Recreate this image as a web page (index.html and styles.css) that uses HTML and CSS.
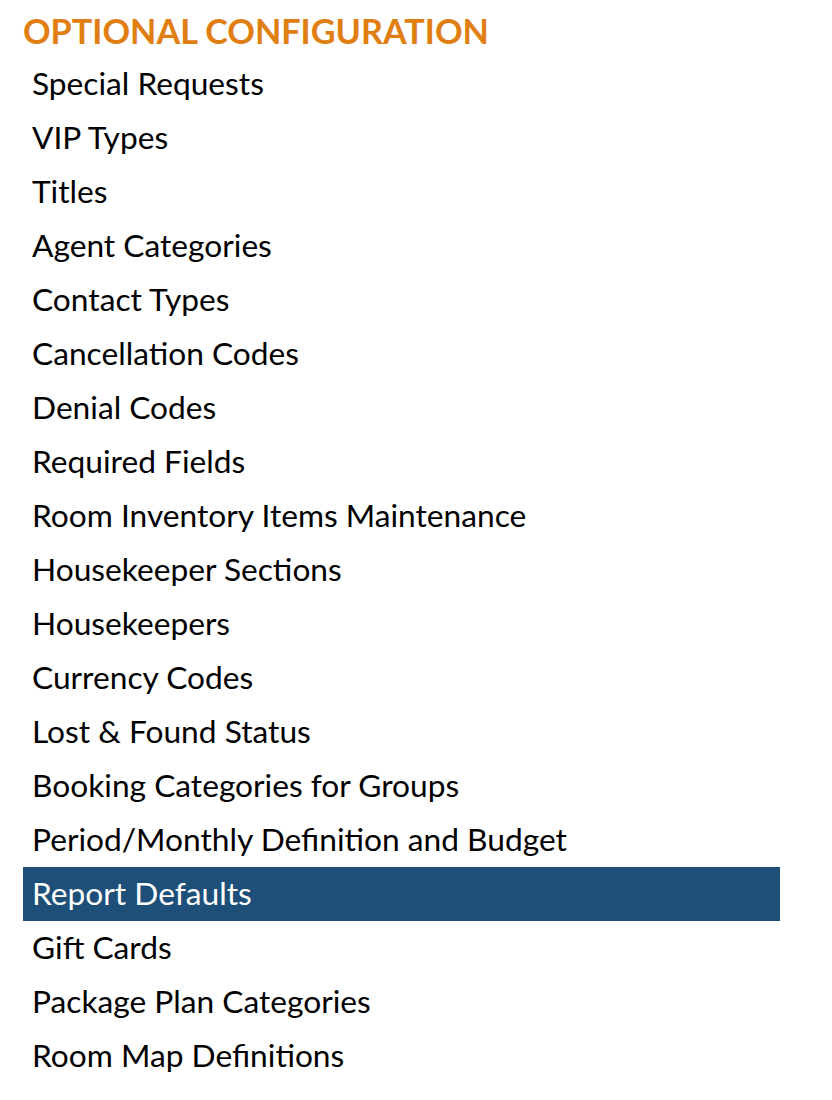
FILE: index.html
```html
<!DOCTYPE html>
<html>
<head>
<meta charset="utf-8">
<link rel="stylesheet" href="styles.css">
</head>
<body>
<div class="panel">
  <h2 class="title">OPTIONAL CONFIGURATION</h2>
  <ul class="menu">
    <li class="item">Special Requests</li>
    <li class="item">VIP Types</li>
    <li class="item">Titles</li>
    <li class="item">Agent Categories</li>
    <li class="item">Contact Types</li>
    <li class="item">Cancellation Codes</li>
    <li class="item">Denial Codes</li>
    <li class="item">Required Fields</li>
    <li class="item">Room Inventory Items Maintenance</li>
    <li class="item">Housekeeper Sections</li>
    <li class="item">Housekeepers</li>
    <li class="item">Currency Codes</li>
    <li class="item">Lost &amp; Found Status</li>
    <li class="item">Booking Categories for Groups</li>
    <li class="item">Period/Monthly Definition and Budget</li>
    <li class="item active">Report Defaults</li>
    <li class="item">Gift Cards</li>
    <li class="item">Package Plan Categories</li>
    <li class="item">Room Map Definitions</li>
  </ul>
</div>
</body>
</html>
```
FILE: styles.css
```css
html, body {
  margin: 0;
  padding: 0;
  background: #ffffff;
}
.panel {
  padding: 11px 0 0 23px;
  width: 757px;
  font-family: Lato, "Open Sans", sans-serif;
}
.title {
  margin: 0;
  font-size: 34.2px;
  line-height: 40px;
  font-weight: 700;
  color: #e07e12;
}
.menu {
  list-style: none;
  margin: 6px 0 0 0;
  padding: 0;
}
.item {
  height: 54px;
  line-height: 53px;
  padding-left: 9px;
  font-size: 31.7px;
  color: #000000;
}
.item.active {
  background: #1d4f79;
  color: #ffffff;
}
```
